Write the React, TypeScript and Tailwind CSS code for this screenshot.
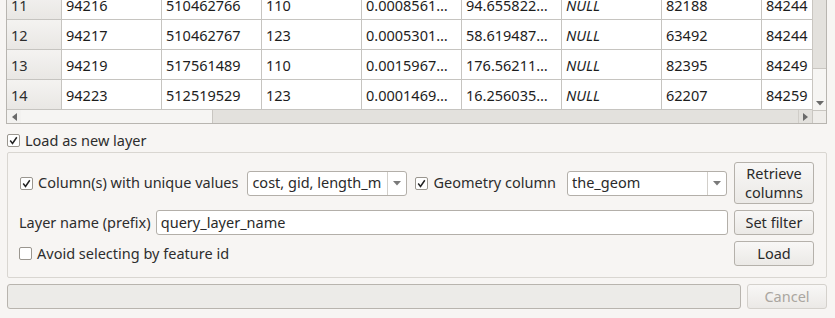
import React from "react";

const rows = [
  ["11", "94216", "510462766", "110", "0.0008561…", "94.655822…", "NULL", "82188", "84244"],
  ["12", "94217", "510462767", "123", "0.0005301…", "58.619487…", "NULL", "63492", "84244"],
  ["13", "94219", "517561489", "110", "0.0015967…", "176.56211…", "NULL", "82395", "84249"],
  ["14", "94223", "512519529", "123", "0.0001469…", "16.256035…", "NULL", "62207", "84259"],
];

function Check({ checked }: { checked: boolean }) {
  return (
    <div className="w-[13px] h-[13px] bg-white border border-[#9a968f] rounded-[2px] flex items-center justify-center shrink-0">
      {checked && (
        <svg width="9" height="9" viewBox="0 0 9 9">
          <path d="M1.2 4.6 L3.5 7.4 L7.8 1.2" stroke="#222" strokeWidth="1.5" fill="none" />
        </svg>
      )}
    </div>
  );
}

function DownTri() {
  return (
    <svg width="8" height="5" viewBox="0 0 8 5">
      <path d="M0 0 H8 L4 4.5 Z" fill="#7a7a7a" />
    </svg>
  );
}

function Combo({ value }: { value: string }) {
  return (
    <div className="w-[160px] h-[25px] bg-white border border-[#b3afa9] rounded-[3px] flex items-stretch shrink-0">
      <div className="flex-1 flex items-center pl-[4px] text-[#2a2a2a]">{value}</div>
      <div className="w-[19px] border-l border-[#d2cfca] flex items-center justify-center">
        <DownTri />
      </div>
    </div>
  );
}

function Btn({ children, h, disabled }: { children: React.ReactNode; h: string; disabled?: boolean }) {
  return (
    <div
      className={
        "w-[80px] " +
        h +
        " rounded-[3px] border flex items-center justify-center text-center leading-[19px] shrink-0 bg-gradient-to-b from-[#f8f7f6] to-[#ebe9e6] " +
        (disabled ? "border-[#d4d1cc] text-[#aaa6a0]" : "border-[#b5b1ab] text-[#2a2a2a]")
      }
    >
      {children}
    </div>
  );
}

export default function App() {
  return (
    <div
      className="w-[835px] h-[318px] bg-[#f7f5f3] overflow-hidden text-[14.5px] text-[#2d2d2d]"
      style={{ fontFamily: '"Noto Sans", "Open Sans", sans-serif' }}
    >
      {/* Table */}
      <div className="ml-[6px] w-[821px] h-[124px] border-l border-r border-b border-[#b8b5b0] flex bg-white">
        <div className="w-[805px] flex flex-col">
          <div className="h-[110px] overflow-hidden">
            <div className="-mt-[10px]">
              {rows.map((r) => (
                <div key={r[0]} className="flex h-[30px] border-b border-[#c6c4c0] items-stretch">
                  <div className="w-[55px] shrink-0 border-r border-[#c6c4c0] bg-gradient-to-b from-[#f4f3f1] to-[#e9e7e4] flex items-center pl-[4px] pt-[2px]">
                    {r[0]}
                  </div>
                  {r.slice(1).map((c, i) => (
                    <div
                      key={i}
                      className={
                        (i === 7 ? "w-[50px]" : "w-[100px] border-r border-[#c6c4c0]") +
                        " shrink-0 flex items-center pl-[4px] pt-[2px] overflow-hidden whitespace-nowrap text-[#1d1d1d] " +
                        (c === "NULL" ? "italic" : "")
                      }
                    >
                      {c}
                    </div>
                  ))}
                </div>
              ))}
            </div>
          </div>
          {/* horizontal scrollbar */}
          <div className="h-[13px] flex bg-[#e3e1dd]">
            <div className="w-[14px] flex items-center justify-center bg-[#f3f2f0]">
              <svg width="5" height="8" viewBox="0 0 5 8">
                <path d="M5 0 V8 L0 4 Z" fill="#6a6a6a" />
              </svg>
            </div>
            <div className="w-[192px] bg-[#f6f5f3] border-r border-[#c9c6c1]" />
            <div className="flex-1" />
            <div className="w-[14px] flex items-center justify-center border-l border-[#d0cdc8]">
              <svg width="5" height="8" viewBox="0 0 5 8">
                <path d="M0 0 V8 L5 4 Z" fill="#6a6a6a" />
              </svg>
            </div>
          </div>
        </div>
        <div className="w-[14px] flex flex-col border-l border-[#c9c6c1]">
          <div className="h-[110px] bg-[#e3e1dd] flex flex-col">
            <div className="flex-1" />
            <div className="h-[28px] bg-[#f6f5f3] border-t border-[#c9c6c1]" />
            <div className="h-[14px] flex items-center justify-center bg-[#f6f5f3]">
              <svg width="8" height="5" viewBox="0 0 8 5">
                <path d="M0 0 H8 L4 4.5 Z" fill="#6a6a6a" />
              </svg>
            </div>
          </div>
          <div className="flex-1 bg-[#efedea] border-t border-[#c9c6c1]" />
        </div>
      </div>

      {/* Load as new layer */}
      <div className="mt-[10px] ml-[7px] flex items-center gap-[5px] h-[13px]">
        <Check checked />
        <span className="leading-none">Load as new layer</span>
      </div>

      {/* Group box */}
      <div className="mt-[5px] ml-[7px] w-[820px] h-[126px] border border-[#d9d6d1] rounded-[2px] pl-[10px] pr-[12px] pt-[9px] flex flex-col">
        <div className="flex items-center h-[42px]">
          <div className="w-[230px] flex items-center gap-[5px] pl-[2px]">
            <Check checked />
            <span>Column(s) with unique values</span>
          </div>
          <Combo value="cost, gid, length_m" />
          <div className="w-[160px] flex items-center gap-[5px] pl-[8px]">
            <Check checked />
            <span>Geometry column</span>
          </div>
          <Combo value="the_geom" />
          <div className="ml-[7px]">
            <Btn h="h-[42px]">
              Retrieve
              <br />
              columns
            </Btn>
          </div>
        </div>
        <div className="flex items-center h-[25px] mt-[6px]">
          <div className="w-[138px] pl-[1px]">Layer name (prefix)</div>
          <div className="w-[573px] h-[25px] bg-white border border-[#b3afa9] rounded-[3px] flex items-center pl-[4px] text-[#2a2a2a]">
            query_layer_name
          </div>
          <div className="ml-[6px]">
            <Btn h="h-[25px]">Set filter</Btn>
          </div>
        </div>
        <div className="flex items-center h-[25px] mt-[6px]">
          <div className="flex-1 flex items-center gap-[5px] pl-[1px]">
            <Check checked={false} />
            <span>Avoid selecting by feature id</span>
          </div>
          <Btn h="h-[25px]">Load</Btn>
        </div>
      </div>

      {/* Progress + cancel */}
      <div className="mt-[6px] ml-[7px] flex items-center gap-[6px]">
        <div className="w-[734px] h-[25px] rounded-[3px] border border-[#b8b4ae] bg-[#ecebe8]" />
        <Btn h="h-[25px]" disabled>
          Cancel
        </Btn>
      </div>
    </div>
  );
}
